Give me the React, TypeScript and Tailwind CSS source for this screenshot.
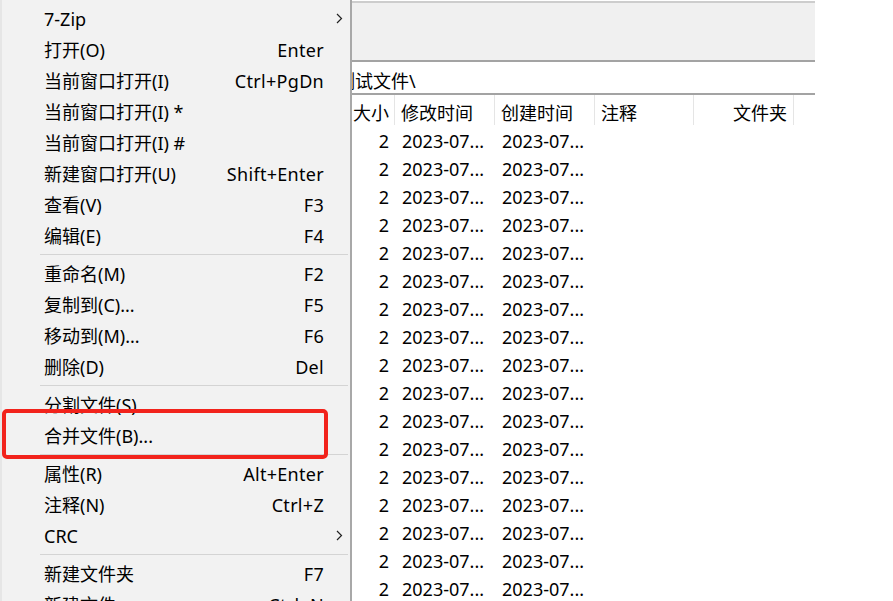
type MenuEntry =
  | { sep: true }
  | { label: string; shortcut?: string; sub?: boolean; sep?: false }

const menu: MenuEntry[] = [
  { label: '7-Zip', sub: true },
  { label: '打开(O)', shortcut: 'Enter' },
  { label: '当前窗口打开(I)', shortcut: 'Ctrl+PgDn' },
  { label: '当前窗口打开(I) *' },
  { label: '当前窗口打开(I) #' },
  { label: '新建窗口打开(U)', shortcut: 'Shift+Enter' },
  { label: '查看(V)', shortcut: 'F3' },
  { label: '编辑(E)', shortcut: 'F4' },
  { sep: true },
  { label: '重命名(M)', shortcut: 'F2' },
  { label: '复制到(C)...', shortcut: 'F5' },
  { label: '移动到(M)...', shortcut: 'F6' },
  { label: '删除(D)', shortcut: 'Del' },
  { sep: true },
  { label: '分割文件(S)...' },
  { label: '合并文件(B)...' },
  { sep: true },
  { label: '属性(R)', shortcut: 'Alt+Enter' },
  { label: '注释(N)', shortcut: 'Ctrl+Z' },
  { label: 'CRC', sub: true },
  { sep: true },
  { label: '新建文件夹', shortcut: 'F7' },
  { label: '新建文件', shortcut: 'Ctrl+N' },
]

const font = { fontFamily: '"Noto Sans", "Noto Sans CJK SC", sans-serif' }

function Chevron() {
  return (
    <svg width="7" height="11" viewBox="0 0 7 11" fill="none">
      <path d="M1 1 L5.5 5.5 L1 10" stroke="#222" strokeWidth="1.2" />
    </svg>
  )
}

function ContextMenu() {
  return (
    <div className="absolute left-0 top-0 w-[352px] h-[640px] bg-[#f2f2f2] border-l-2 border-l-[#e6e6e6] border-r-2 border-r-[#a8a8a8] pt-[3px] overflow-hidden">
      {menu.map((m, i) =>
        m.sep ? (
          <div key={i} className="h-[7px] flex items-center pl-[38px] pr-[2px]">
            <div className="h-px w-full bg-[#d4d4d4]" />
          </div>
        ) : (
          <div key={i} className="h-[31px] flex items-center pl-[42px] text-[18px] text-black leading-none">
            <span className="flex-1 whitespace-nowrap">{m.label}</span>
            <span className="whitespace-nowrap tracking-[0.3px]">{m.shortcut}</span>
            <span className="w-[26px] flex justify-center pl-[4px]">{m.sub && <Chevron />}</span>
          </div>
        )
      )}
    </div>
  )
}

function FileWindow() {
  const rows = Array.from({ length: 17 })
  return (
    <div className="w-[815px] h-full flex flex-col bg-white">
      <div className="h-[3px] border-t border-t-white border-b-2 border-b-[#cdcdcd]" />
      <div className="h-[59px] bg-[#f0f0f0] border-b-2 border-b-[#a3a3a3]" />
      <div className="h-[33px] flex items-center pt-[8px] pl-[337px] text-[18px] text-black border-b-2 border-b-[#a3a3a3]">
        测试文件\
      </div>
      <div className="h-[30px] flex items-center text-[18px] text-black">
        <div className="w-[350px]" />
        <div className="w-[45px] h-full flex items-center pt-[6px] justify-end pr-[5px] border-r border-r-[#e5e5e5]">大小</div>
        <div className="w-[100px] h-full flex items-center pt-[6px] pl-[6px] border-r border-r-[#e5e5e5]">修改时间</div>
        <div className="w-[100px] h-full flex items-center pt-[6px] pl-[6px] border-r border-r-[#e5e5e5]">创建时间</div>
        <div className="w-[99px] h-full flex items-center pt-[6px] pl-[6px] border-r border-r-[#e5e5e5]">注释</div>
        <div className="w-[100px] h-full flex items-center pt-[6px] justify-end pr-[6px] border-r border-r-[#e5e5e5]">文件夹</div>
      </div>
      {rows.map((_, i) => (
        <div key={i} className="h-[28px] shrink-0 flex items-center pt-[4px] text-[18px] text-black">
          <div className="w-[350px]" />
          <div className="w-[45px] text-right pr-[6px]">2</div>
          <div className="w-[100px] pl-[7px]">2023-07...</div>
          <div className="w-[100px] pl-[7px]">2023-07...</div>
        </div>
      ))}
    </div>
  )
}

export default function App() {
  return (
    <div className="relative w-[893px] h-[601px] overflow-hidden bg-white" style={font}>
      <FileWindow />
      <ContextMenu />
      <div className="absolute left-[2px] top-[409px] w-[326px] h-[50px] rounded-[5px] border-4 border-[#f2231c]" />
    </div>
  )
}
